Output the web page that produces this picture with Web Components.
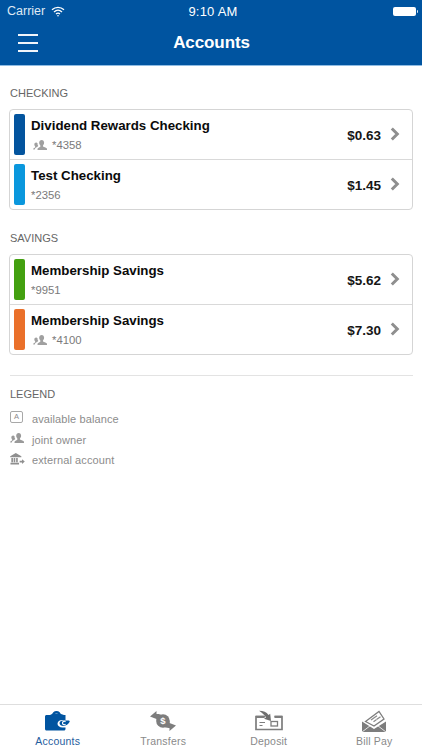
<!DOCTYPE html>
<html><head><meta charset="utf-8">
<style>
html,body{margin:0;padding:0;height:100%;background:#fff;font-family:"Liberation Sans",Arial,sans-serif}
app-shell{height:750px}
</style></head><body>
<app-shell>
  <nav-header slot="header" title="Accounts"></nav-header>
  <account-section label="CHECKING" style="margin-top:20px">
    <account-row color="#03549e" name="Dividend Rewards Checking" num="*4358" joint amount="$0.63"></account-row>
    <account-row color="#0a97dd" name="Test Checking" num="*2356" amount="$1.45"></account-row>
  </account-section>
  <account-section label="SAVINGS" style="margin-top:21px">
    <account-row color="#43a010" name="Membership Savings" num="*9951" amount="$5.62"></account-row>
    <account-row color="#ea702a" name="Membership Savings" num="*4100" joint amount="$7.30"></account-row>
  </account-section>
  <legend-box></legend-box>
  <tab-bar slot="footer"></tab-bar>
</app-shell>
<script>
const JOINT=`<path d="M10.500 1c1.900 0 3 1.500 3 3.400 0 1.300-.6 2.500-1.400 3.100v1.200l3.600 1.500c.8.300 1.300.9 1.300 1.700v1.100H5.500v-1.100c0-.8.500-1.400 1.300-1.700l2.100-1.200V7.500c-.8-.6-1.400-1.800-1.400-3.100C7.500 2.500 8.800 1 10.500 1z"/><path d="M3.800 4c.7 0 1.300.3 1.700.8-.1 1.100.1 2.300.8 3.200l-.1.6-1.800 1C3 10.300 2.300 11 2.200 12.500H.3V12c0-.6.3-1 .9-1.300l1.400-.8v-1C2 8.300 1.600 7.400 1.600 6.500 1.600 5 2.500 4 3.800 4z"/>`;
const BANK=`<path d="M6.500 0 13 3.800V5H0V3.800zM1.300 5.800h1.900v5H1.300zM4 5.800h1.900v5H4zM6.900 5.800h1.900v5H6.900zM.3 11.500h10v2H.3z"/><path d="M11 9h2.800V7.300L17 10l-3.200 2.800V11H11z"/>`;
function def(name,css,html){
  customElements.define(name,class extends HTMLElement{
    connectedCallback(){ if(this.shadowRoot)return;
      const s=this.attachShadow({mode:'open'});
      s.innerHTML=`<style>${css}</style>`+(typeof html==='function'?html(this):html);
    }
  });
}
def('app-shell',`:host{display:flex;flex-direction:column;width:422px;background:#fff;overflow:hidden}
.main{flex:1;display:flex;flex-direction:column;min-height:0}`,
`<slot name="header"></slot><div class="main"><slot></slot></div><slot name="footer"></slot>`);

def('nav-header',`:host{display:block;height:65px;background:#0054a0;color:#fff;border-bottom:1px solid #8fbce3;box-sizing:content-box}
.status{height:21px;padding-top:1px;box-sizing:border-box;display:grid;grid-template-columns:1fr auto 1fr;align-items:center;padding-left:7px;padding-right:5px;font-size:13px}
.l{display:flex;align-items:center;gap:6px;color:#dfe9f3;font-size:12.500px}
.t{letter-spacing:.2px;margin-left:2px}
.r{display:flex;justify-content:flex-end;padding-right:1px}
.bat{width:23px;height:9px;background:#fff;border-radius:2px;position:relative}
.bat::after{content:"";position:absolute;right:-2px;top:3px;width:1.500px;height:3px;background:#dfe9f3;border-radius:0 1px 1px 0}
.bar{height:44px;display:grid;grid-template-columns:1fr auto 1fr;align-items:center;padding:0 17px 0 18px}
.h{font-size:17px;font-weight:700;letter-spacing:-.1px}
.burger{display:flex;flex-direction:column;gap:6px;width:20px}
.burger i{display:block;height:2px;background:#f1f5fa}`,
el=>`<div class="status"><div class="l"><span>Carrier</span><svg width="14" height="11" viewBox="0 0 14 11" fill="none" stroke="#fff" stroke-width="1.300"><path d="M1 3.800C4.500.6 9.500.6 13 3.800"/><path d="M3 6c2.400-2.200 5.600-2.200 8 0"/><path d="M5 8c1.200-1 2.800-1 4 0"/><circle cx="7" cy="9.700" r=".8" fill="#fff" stroke="none"/></svg></div><div class="t">9:10 AM</div><div class="r"><div class="bat"></div></div></div>
<div class="bar"><div class="burger"><i></i><i></i><i></i></div><div class="h">${el.getAttribute('title')}</div><div></div></div>`);

def('account-section',`:host{display:block;padding:0 9px}
.lab{font-size:11px;color:#666;height:15px;line-height:15px;padding-left:1px;margin-bottom:8px}
.card{border:1px solid #d5d5d5;border-radius:4px;display:flex;flex-direction:column;overflow:hidden;background:#fff}
::slotted(account-row:not(:first-child)){border-top:1px solid #d9d9d9}`,
el=>`<div class="lab">${el.getAttribute('label')}</div><div class="card"><slot></slot></div>`);

def('account-row',`:host{display:grid;grid-template-columns:11px 1fr auto 10px;column-gap:6px;grid-auto-rows:41px;padding:4px 12px 4px 4px;align-items:stretch}
.c{border-radius:2px}
.m{display:flex;flex-direction:column;min-width:0}
.n{font-size:13.300px;font-weight:700;color:#0b0b0b;line-height:18px;margin-top:3px}
.s{display:flex;align-items:center;gap:5px;font-size:11.300px;color:#7a7a7a;height:17px;margin-top:1px}
.a{align-self:center;font-size:13.500px;font-weight:700;color:#161616;margin-top:2px;margin-right:3px}
.ch{align-self:center;margin-top:-1px}
svg{display:block}`,
el=>`<div class="c" style="background:${el.getAttribute('color')}"></div><div class="m"><div class="n">${el.getAttribute('name')}</div><div class="s">${el.hasAttribute('joint')?`<svg style="margin-left:2px" width="14" height="12" viewBox="0 0 17 14" fill="#a0a0a0">${JOINT}</svg>`:''}<span>${el.getAttribute('num')}</span></div></div><div class="a">${el.getAttribute('amount')}</div><svg class="ch" width="10" height="14" viewBox="0 0 10 14" fill="none" stroke="#8f8f8f" stroke-width="3"><path d="M1.800 1.500 7.300 7 1.800 12.500"/></svg>`);

def('legend-box',`:host{display:block;margin:20px 9px 0 10px;border-top:1px solid #e3e3e3;padding-top:10px}
.lab{font-size:11px;color:#666;height:16px;line-height:16px;margin-bottom:7px}
.r{display:grid;grid-template-columns:14px 1fr;column-gap:8px;align-items:center;height:20.500px;font-size:11px;color:#8c8c8c}
.r span{letter-spacing:.1px}
.A{width:11px;height:10px;border:1px solid #a8a8a8;border-radius:2px;font-size:7.500px;line-height:10px;text-align:center;color:#8c8c8c;margin-top:-4px}
svg{display:block;margin-top:-3px}`,
`<div class="lab">LEGEND</div>
<div class="r"><div class="A">A</div><span>available balance</span></div>
<div class="r"><svg width="14" height="12" viewBox="0 0 17 14" fill="#9a9a9a">${JOINT}</svg><span>joint owner</span></div>
<div class="r"><svg width="15" height="12" viewBox="0 0 17 14" fill="#8f8f8f">${BANK}</svg><span>external account</span></div>`);

def('tab-bar',`:host{display:grid;grid-template-columns:repeat(4,105.500px);padding-left:5px;height:45px;border-top:1px solid #dedede;background:#fff;margin-top:auto}
.t{display:flex;flex-direction:column;align-items:center;font-size:10.500px;color:#8a8a8a;letter-spacing:.2px;padding-top:5px}
.t svg{display:block;width:28px;height:24px;margin-bottom:1px}
.on{color:#1f5d9e}`,
`<div class="t on"><svg viewBox="0 0 28 24"><path d="M8 5.500C8 2.800 10 1 12.500 1S17 2.800 17 5.500h-2.200c0-1.300-1-2.300-2.300-2.300s-2.300 1-2.300 2.300z" fill="#0054a0"/><path d="M2.500 5H6l3-1.500h6.500L20 5h1.500v5h-3c-3 0-5 1.700-5 3.700s2 3.700 5 3.700h3V19c0 .8-.7 1.500-1.500 1.500H2.500C1.700 20.500 1 19.800 1 19V6.500C1 5.700 1.700 5 2.500 5z" fill="#0054a0"/><path d="M19.500 10.500h5.200c1 0 1.300.8.800 1.600-1.100 2.100-3.300 3.800-6 3.800-2.300 0-4-1.100-4-2.700s1.700-2.700 4-2.700z" fill="#0054a0"/><path d="M21.500 11.900a1.700 1.700 0 1 0 0 2.200" fill="none" stroke="#fff" stroke-width="1.100"/></svg><span>Accounts</span></div>
<div class="t"><svg viewBox="0 0 28 24" fill="#7d7d7d"><circle cx="14" cy="11" r="6.800"/><path d="M1 6.500 7.500 1v3c2.700-.1 4.500.4 6.200 2.200-3.600.1-5.900 2.500-6.200 5.800L7.500 9z"/><path d="M27 15.500 20.500 21v-3c-2.700.1-4.500-.4-6.200-2.200 3.600-.1 5.900-2.500 6.200-5.800l0 3z"/><text x="14" y="14" font-size="9.500" font-weight="700" text-anchor="middle" fill="#fff" font-family="Liberation Sans">$</text></svg><span>Transfers</span></div>
<div class="t"><svg viewBox="0 0 28 24" fill="none"><path d="M10 6.500H1v13h26v-13h-7.500" stroke="#7d7d7d" stroke-width="1.700"/><path d="M1 5.800h8.500v2.200H1zM19.500 5.800H27v2.200h-7.500z" fill="#7d7d7d"/><path d="M4.500 12.500h5.500M4.500 15.500h3" stroke="#7d7d7d" stroke-width="1.200"/><rect x="16" y="11.500" width="6.500" height="4.500" stroke="#7d7d7d" stroke-width="1.300"/><path d="M4 .8c4.500 0 7.500 1 9.500 4.200l1.700-1.200.8 7.200-7-2.200 2-1.300C9.700 5 7.700 3.500 4 .8z" fill="#6f6f6f"/></svg><span>Deposit</span></div>
<div class="t"><svg viewBox="0 0 28 24"><path d="M5.500 11.500 19 1.500l5 7.500-10 7z" fill="#fff" stroke="#7d7d7d" stroke-width="1.300"/><path d="M11 10l6-4.300M13.500 11.800l2.800-2M16.500 9.500l4-2.800" stroke="#8a8a8a" stroke-width="1.300"/><path d="M2 11.500 14 19 26 11.500V22H2z" fill="#7d7d7d"/><path d="M2 22 10.500 15.500M26 22 17.500 15.500" stroke="#fff" stroke-width=".8"/></svg><span>Bill Pay</span></div>`);
</script>
</body></html>
